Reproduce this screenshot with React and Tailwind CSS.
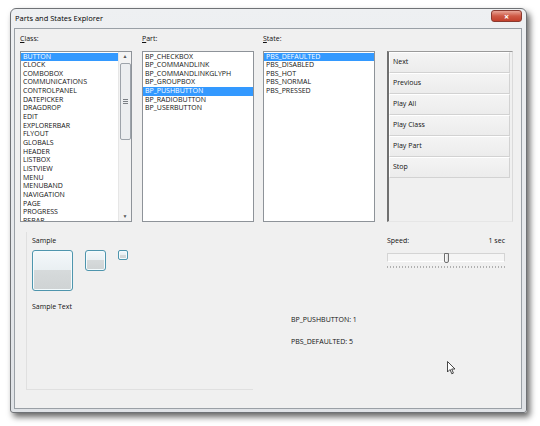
const classes = ['BUTTON', 'CLOCK', 'COMBOBOX', 'COMMUNICATIONS', 'CONTROLPANEL', 'DATEPICKER', 'DRAGDROP', 'EDIT', 'EXPLORERBAR', 'FLYOUT', 'GLOBALS', 'HEADER', 'LISTBOX', 'LISTVIEW', 'MENU', 'MENUBAND', 'NAVIGATION', 'PAGE', 'PROGRESS', 'REBAR']
const parts = ['BP_CHECKBOX', 'BP_COMMANDLINK', 'BP_COMMANDLINKGLYPH', 'BP_GROUPBOX', 'BP_PUSHBUTTON', 'BP_RADIOBUTTON', 'BP_USERBUTTON']
const states = ['PBS_DEFAULTED', 'PBS_DISABLED', 'PBS_HOT', 'PBS_NORMAL', 'PBS_PRESSED']
const actions = ['Next', 'Previous', 'Play All', 'Play Class', 'Play Part', 'Stop']

function Label({ first, rest }) {
  return (
    <div className="h-[11px] leading-[11px] mb-[7px]">
      <span className="underline">{first}</span>
      {rest}
    </div>
  )
}

function ListBox({ items, selected, scroll }) {
  return (
    <div className="h-[171px] border border-[#8e9399] bg-white flex overflow-hidden">
      <div className="flex-1 pt-[0.5px]">
        {items.map((item, i) => (
          <div
            key={item}
            className={`h-[8.67px] leading-[8.67px] pl-[2px] whitespace-nowrap ${i === selected ? 'bg-[#3399ff] text-white' : ''}`}
          >
            {item}
          </div>
        ))}
      </div>
      {scroll && (
        <div className="w-[13px] bg-[#f3f3f3] border-l border-[#e6e6e6] flex flex-col items-center">
          <div className="h-[9px] flex items-center justify-center text-[5px] text-[#555]">▲</div>
          <div className="mt-[2px] w-[11px] h-[77px] rounded-[2px] border border-[#9da3aa] bg-[#eceef0] flex flex-col items-center justify-center gap-[1px]">
            <div className="w-[5px] h-px bg-[#7a7f85]" />
            <div className="w-[5px] h-px bg-[#7a7f85]" />
            <div className="w-[5px] h-px bg-[#7a7f85]" />
          </div>
          <div className="flex-1" />
          <div className="h-[9px] flex items-center justify-center text-[5px] text-[#555]">▼</div>
        </div>
      )}
    </div>
  )
}

function SampleButton({ size, radius }) {
  return (
    <div
      className={`${size} ${radius} border border-[#4e95ad] shadow-[inset_0_0_0_1px_#f4fbfd] bg-[linear-gradient(#f3f8fa_0%,#e9eff2_50%,#d6dadb_50%,#cfd3d4_100%)]`}
    />
  )
}

export default function App() {
  return (
    <div className="w-[540px] h-[426px] bg-white pt-[8px] pl-[10px] font-['Open_Sans',sans-serif] text-[7px] text-[#111] relative overflow-hidden">
      <div className="w-[517px] h-[405px] rounded-t-[6px] rounded-b-[3px] border border-[#6f7276] bg-[linear-gradient(#eef0f2,#dfe2e6)] shadow-[3px_4px_6px_rgba(0,0,0,0.6)] flex flex-col pl-[3px] pr-[4px] pb-[3px]">
        <div className="h-[19px] flex justify-between">
          <div className="pl-[1px] pt-[4px] text-[7.5px] leading-[11px] text-black">Parts and States Explorer</div>
          <div className="mt-[1px] w-[31px] h-[12px] rounded-[3px] border border-[#8a3a30] bg-[linear-gradient(#e9a597,#cf5a46_50%,#c2402c)] flex items-center justify-center text-white text-[9px] font-bold leading-none">
            ×
          </div>
        </div>
        <div className="flex-1 border border-[#9aa0a6] bg-[#f0f0f0] flex flex-col">
          <div className="flex pl-[5px] pt-[4px]">
            <div className="w-[112px]">
              <Label first="C" rest="lass:" />
              <ListBox items={classes} selected={0} scroll />
            </div>
            <div className="w-[112px] ml-[10px]">
              <Label first="P" rest="art:" />
              <ListBox items={parts} selected={4} />
            </div>
            <div className="w-[112px] ml-[9px]">
              <Label first="S" rest="tate:" />
              <ListBox items={states} selected={0} />
            </div>
            <div className="ml-[12px] mt-[18px] w-[126px] h-[171px] border-l-2 border-t border-l-[#707070] border-t-[#9a9a9a] border-r border-b border-r-[#dadada] border-b-[#e6e6e6] flex flex-col">
              {actions.map((a) => (
                <div
                  key={a}
                  className="w-[121px] h-[21px] pl-[3px] flex items-center border-t border-l border-white border-r border-b border-r-[#d2d2d2] border-b-[#d2d2d2] bg-[linear-gradient(#f4f4f4,#ececec)]"
                >
                  {a}
                </div>
              ))}
            </div>
          </div>

          <div className="flex mt-[10px] ml-[11px]">
            <div className="w-[227px] h-[158px] border-l border-b border-[#e0e0e0] pl-[5px] pt-[4px]">
              <div className="h-[10px] leading-[10px]">Sample</div>
              <div className="flex items-start gap-[12px] mt-[4px]">
                <SampleButton size="w-[41px] h-[41px]" radius="rounded-[3px]" />
                <SampleButton size="w-[21px] h-[21px]" radius="rounded-[3px]" />
                <SampleButton size="w-[10px] h-[10px]" radius="rounded-[2px]" />
              </div>
              <div className="h-[10px] leading-[10px] mt-[11px]">Sample Text</div>
            </div>
            <div className="w-[96px] ml-[38px] pt-[83px]">
              <div className="h-[10px] leading-[10px] whitespace-nowrap">BP_PUSHBUTTON: 1</div>
              <div className="h-[10px] leading-[10px] mt-[12px] whitespace-nowrap">PBS_DEFAULTED: 5</div>
            </div>
            <div className="w-[118px] pt-[4px]">
              <div className="h-[10px] leading-[10px] flex justify-between">
                <span>Speed:</span>
                <span>1 sec</span>
              </div>
              <div className="relative mt-[7px] h-[9px] border border-[#d4d4d4] border-b-white bg-[#f5f5f5]">
                <div className="absolute left-[56px] -top-[1px] w-[5px] h-[10px] border border-[#707070] rounded-b-[2px] bg-[linear-gradient(90deg,#ffffff,#dcdcdc)]" />
              </div>
              <div className="mt-[4px] h-[2px] bg-[repeating-linear-gradient(90deg,#b0b0b0_0_1px,transparent_1px_3px)]" />
            </div>
          </div>
        </div>
      </div>
      <svg className="absolute left-[447px] top-[361px]" width="9" height="14" viewBox="0 0 9 14">
        <path d="M0.5 0.5 L0.5 11 L3 8.5 L4.8 12.8 L6.4 12.1 L4.7 8 L8 8 Z" fill="white" stroke="#333" strokeWidth="0.9" strokeLinejoin="round" />
      </svg>
    </div>
  )
}
